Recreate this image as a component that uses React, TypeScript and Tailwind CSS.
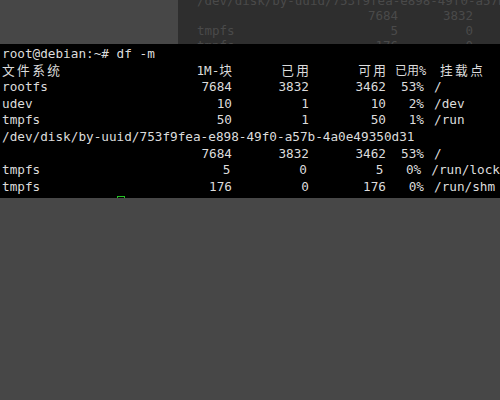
const mono = "font-['DejaVu_Sans_Mono','Liberation_Mono','Noto_Sans_CJK_SC',monospace]";

type Row = { fs?: string; size: string; used: string; avail: string; pct: string; mount: string };

const rows: (Row | string)[] = [
  { fs: 'rootfs', size: '7684', used: '3832', avail: '3462', pct: '53%', mount: '/' },
  { fs: 'udev', size: '10', used: '1', avail: '10', pct: '2%', mount: '/dev' },
  { fs: 'tmpfs', size: '50', used: '1', avail: '50', pct: '1%', mount: '/run' },
  '/dev/disk/by-uuid/753f9fea-e898-49f0-a57b-4a0e49350d31',
  { size: '7684', used: '3832', avail: '3462', pct: '53%', mount: '/' },
  { fs: 'tmpfs', size: '5', used: '0', avail: '5', pct: '0%', mount: '/run/lock' },
  { fs: 'tmpfs', size: '176', used: '0', avail: '176', pct: '0%', mount: '/run/shm' },
];

// wide chars get extra spacing between them, none after the last one
function Cjk({ children }: { children: string }) {
  return (
    <>
      <span className="tracking-[2.4px]">{children.slice(0, -1)}</span>
      {children.slice(-1)}
    </>
  );
}

function DfRow({ r }: { r: Row }) {
  return (
    <div className="flex h-[16.6px] whitespace-pre">
      <span className="w-[160px]">{r.fs ?? ''}</span>
      <span className="w-[70px] text-right">{r.size}</span>
      <span className="w-[77px] text-right">{r.used}</span>
      <span className="w-[77px] text-right">{r.avail}</span>
      <span className="w-[38px] text-right">{r.pct}</span>
      <span className="ml-[10px]">{r.mount}</span>
    </div>
  );
}

function Ghost() {
  return (
    <div className={`flex-1 bg-[#2e2e2e] text-[#4a4a4a] text-[12.5px] leading-[15px] overflow-hidden ${mono}`}>
      <div className="-mt-[7px] pl-[19px] whitespace-pre">
        <div>/dev/disk/by-uuid/753f9fea-e898-49f0-a57b-4a0e49350d31</div>
        <div className="flex">
          <span className="w-[201px] text-right">7684</span>
          <span className="w-[75px] text-right">3832</span>
        </div>
        <div className="flex">
          <span className="w-[100px]">tmpfs</span>
          <span className="w-[101px] text-right">5</span>
          <span className="w-[75px] text-right">0</span>
        </div>
        <div className="flex">
          <span className="w-[100px]">tmpfs</span>
          <span className="w-[101px] text-right">176</span>
          <span className="w-[75px] text-right">0</span>
        </div>
      </div>
    </div>
  );
}

export default function App() {
  return (
    <div className="w-[500px] h-[400px] bg-[#474747] flex flex-col overflow-hidden">
      <div className="h-[44px] flex">
        <div className="w-[178px]" />
        <Ghost />
      </div>

      <div className={`h-[154px] bg-black text-[#dcdcdc] text-[12.7px] leading-[16.6px] pl-[2px] pt-[2px] overflow-hidden ${mono}`}>
        <div className="h-[16.6px] whitespace-pre">root@debian:~# df -m</div>
        <div className="flex h-[16.6px] whitespace-pre">
          <span className="w-[160px]"><Cjk>文件系统</Cjk></span>
          <span className="w-[70px] text-right">1M-<Cjk>块</Cjk></span>
          <span className="w-[77px] text-right"><Cjk>已用</Cjk></span>
          <span className="w-[77px] text-right"><Cjk>可用</Cjk></span>
          <span className="ml-[9px] w-[29px] text-[12px]">已用%</span>
          <span className="ml-[16px]"><Cjk>挂载点</Cjk></span>
        </div>
        {rows.map((r, i) =>
          typeof r === 'string' ? (
            <div key={i} className="h-[16.6px] whitespace-pre">{r}</div>
          ) : (
            <DfRow key={i} r={r} />
          )
        )}
        <div className="h-[16.6px] whitespace-pre flex items-start">
          <span>root@debian:~# </span>
          <span className="mt-[1px] w-[8px] h-[14px] border border-[#22c322]" />
        </div>
      </div>

      <div className="flex-1" />
    </div>
  );
}
